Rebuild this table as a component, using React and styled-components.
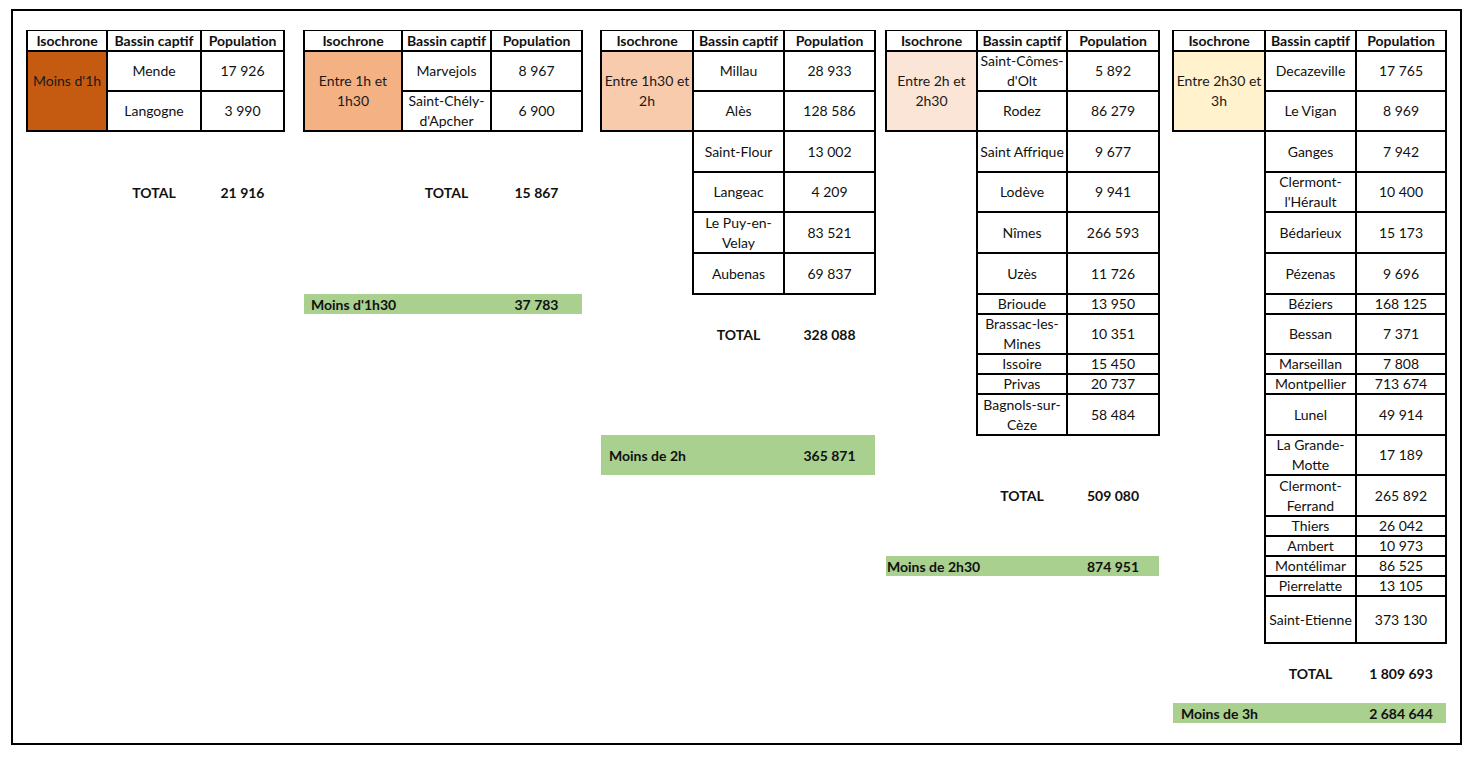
import React from "react";
import styled, { createGlobalStyle } from "styled-components";

const GlobalStyle = createGlobalStyle`
  html, body {
    margin: 0;
    padding: 0;
    background: #fff;
  }
  body {
    font-family: Lato, "Open Sans", Arial, sans-serif;
    color: #111;
  }
`;

const COLS = [14, 80, 94, 83, 20, 98, 89, 91, 19, 92, 91, 91, 11, 91, 90, 92, 14, 92, 91, 90, 14];
const ROWS = [20, 20, 40, 40, 41, 40, 41, 41, 20, 40, 20, 20, 41, 40, 41, 20, 20, 20, 20, 47, 60, 20, 20];

const Frame = styled.div`
  margin: 9px 0 0 11px;
  width: max-content;
  border: 2px solid #000;
  background: #fff;
`;

const Sheet = styled.div`
  display: grid;
  grid-template-columns: ${COLS.map((c) => c + "px").join(" ")};
  grid-template-rows: ${ROWS.map((r) => r + "px").join(" ")};
  font-size: 14px;
`;

const Cell = styled.div`
  grid-column: ${(p) => p.$col} / span ${(p) => p.$span || 1};
  grid-row: ${(p) => p.$row} / span ${(p) => p.$rows || 1};
  margin: -1px;
  border: 2px solid #000;
  display: flex;
  align-items: center;
  justify-content: center;
  text-align: center;
  white-space: pre;
  line-height: 20px;
  background: #fff;
`;

const HeadCell = styled(Cell)`
  font-weight: 700;
  border-top-width: 1.5px;
`;

const IsoCell = styled(Cell)`
  align-items: flex-start;
  padding-top: 19px;
  background: ${(p) => p.$bg};
  color: #1a1a1a;
`;

const TotalCell = styled.div`
  grid-column: ${(p) => p.$col};
  grid-row: ${(p) => p.$row};
  display: flex;
  align-items: center;
  justify-content: center;
  font-weight: 700;
`;

const GreenCell = styled.div`
  grid-column: ${(p) => p.$col} / span ${(p) => p.$span || 1};
  grid-row: ${(p) => p.$row};
  background: #a9d08e;
  display: flex;
  align-items: center;
  justify-content: ${(p) => (p.$left ? "flex-start" : "center")};
  padding-left: ${(p) => (p.$left ? p.$indent : 0)}px;
  font-weight: 700;
  white-space: nowrap;
`;

const tables = [
  {
    col: 2,
    iso: "Moins d'1h",
    bg: "#c55a11",
    rows: [
      ["Mende", "17 926"],
      ["Langogne", "3 990"],
    ],
    total: { row: 6, value: "21 916" },
  },
  {
    col: 6,
    iso: "Entre 1h et\n1h30",
    bg: "#f4b183",
    rows: [
      ["Marvejols", "8 967"],
      ["Saint-Chély-\nd'Apcher", "6 900"],
    ],
    total: { row: 6, value: "15 867" },
    green: { row: 9, label: "Moins d'1h30", value: "37 783", indent: 7 },
  },
  {
    col: 10,
    iso: "Entre 1h30 et\n2h",
    bg: "#f8cbad",
    rows: [
      ["Millau", "28 933"],
      ["Alès", "128 586"],
      ["Saint-Flour", "13 002"],
      ["Langeac", "4 209"],
      ["Le Puy-en-\nVelay", "83 521"],
      ["Aubenas", "69 837"],
    ],
    total: { row: 10, value: "328 088" },
    green: { row: 14, label: "Moins de 2h", value: "365 871", indent: 8 },
  },
  {
    col: 14,
    iso: "Entre 2h et\n2h30",
    bg: "#fbe5d6",
    rows: [
      ["Saint-Cômes-\nd'Olt", "5 892"],
      ["Rodez", "86 279"],
      ["Saint Affrique", "9 677"],
      ["Lodève", "9 941"],
      ["Nîmes", "266 593"],
      ["Uzès", "11 726"],
      ["Brioude", "13 950"],
      ["Brassac-les-\nMines", "10 351"],
      ["Issoire", "15 450"],
      ["Privas", "20 737"],
      ["Bagnols-sur-\nCèze", "58 484"],
    ],
    total: { row: 15, value: "509 080" },
    green: { row: 18, label: "Moins de 2h30", value: "874 951", indent: 1 },
  },
  {
    col: 18,
    iso: "Entre 2h30 et\n3h",
    bg: "#fff2cc",
    rows: [
      ["Decazeville", "17 765"],
      ["Le Vigan", "8 969"],
      ["Ganges", "7 942"],
      ["Clermont-\nl'Hérault", "10 400"],
      ["Bédarieux", "15 173"],
      ["Pézenas", "9 696"],
      ["Béziers", "168 125"],
      ["Bessan", "7 371"],
      ["Marseillan", "7 808"],
      ["Montpellier", "713 674"],
      ["Lunel", "49 914"],
      ["La Grande-\nMotte", "17 189"],
      ["Clermont-\nFerrand", "265 892"],
      ["Thiers", "26 042"],
      ["Ambert", "10 973"],
      ["Montélimar", "86 525"],
      ["Pierrelatte", "13 105"],
      ["Saint-Etienne", "373 130"],
    ],
    total: { row: 21, value: "1 809 693" },
    green: { row: 22, label: "Moins de 3h", value: "2 684 644", indent: 8 },
  },
];

function IsoTable({ t }) {
  const c = t.col;
  return (
    <>
      <HeadCell $col={c} $row={2}>Isochrone</HeadCell>
      <HeadCell $col={c + 1} $row={2}>Bassin captif</HeadCell>
      <HeadCell $col={c + 2} $row={2}>Population</HeadCell>
      <IsoCell $col={c} $row={3} $rows={2} $bg={t.bg}>
        {t.iso}
      </IsoCell>
      {t.rows.map(([name, pop], i) => (
        <React.Fragment key={name}>
          <Cell $col={c + 1} $row={3 + i}>{name}</Cell>
          <Cell $col={c + 2} $row={3 + i}>{pop}</Cell>
        </React.Fragment>
      ))}
      <TotalCell $col={c + 1} $row={t.total.row}>TOTAL</TotalCell>
      <TotalCell $col={c + 2} $row={t.total.row}>{t.total.value}</TotalCell>
      {t.green && (
        <>
          <GreenCell $col={c} $span={2} $row={t.green.row} $left $indent={t.green.indent}>
            {t.green.label}
          </GreenCell>
          <GreenCell $col={c + 2} $row={t.green.row}>
            {t.green.value}
          </GreenCell>
        </>
      )}
    </>
  );
}

export default function App() {
  return (
    <>
      <GlobalStyle />
      <Frame>
        <Sheet>
          {tables.map((t) => (
            <IsoTable key={t.col} t={t} />
          ))}
        </Sheet>
      </Frame>
    </>
  );
}
